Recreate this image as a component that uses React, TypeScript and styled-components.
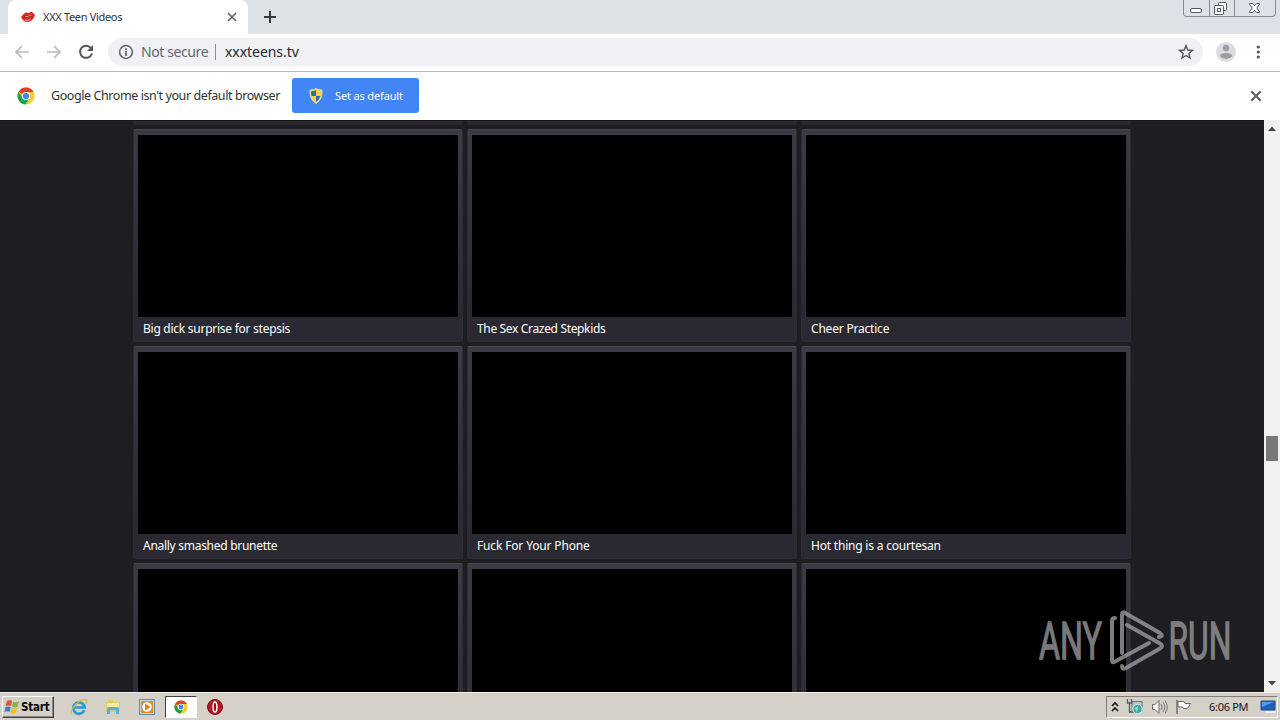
import React from "react";
import styled, { createGlobalStyle } from "styled-components";

const Global = createGlobalStyle`
  * { box-sizing: border-box; }
  html, body { margin: 0; height: 100%; overflow: hidden; }
  body { font-family: "Noto Sans", "Open Sans", sans-serif; }
  svg { display: block; flex: none; }
`;

const Screen = styled.div`
  position: relative;
  width: 1280px;
  height: 720px;
  display: flex;
  flex-direction: column;
  overflow: hidden;
`;

const Label = styled.span<{ $size: number; $spacing?: number; $color?: string }>`
  font-size: ${(p) => p.$size}px;
  letter-spacing: ${(p) => p.$spacing ?? 0}px;
  color: ${(p) => p.$color ?? "#303236"};
  white-space: nowrap;
  line-height: 18px;
`;

const TabStrip = styled.div`
  display: flex;
  height: 34px;
  background: #dee1e6;
  padding-left: 8px;
`;

const Tab = styled.div`
  display: flex;
  align-items: center;
  width: 240px;
  height: 34px;
  padding: 0 11px 0 13px;
  background: #fff;
  border-radius: 8px 8px 0 0;
  gap: 8px;
  & > span { flex: 1; }
`;

const NewTab = styled.div`
  display: flex;
  align-items: center;
  padding-left: 15px;
`;

const WindowButtons = styled.div`
  display: flex;
  margin: 0 4px 0 auto;
  width: 93px;
  height: 17px;
  border: 1px solid #878b96;
  border-top: 0;
  border-radius: 0 0 4px 4px;
`;

const WindowButton = styled.div<{ $width: number }>`
  width: ${(p) => p.$width}px;
  height: 16px;
  & + & { border-left: 1px solid #878b96; }
`;

const Toolbar = styled.div`
  display: flex;
  align-items: center;
  height: 38px;
  background: #fff;
  border-bottom: 1px solid #b4b9b9;
  padding: 0 13px 2px 14px;
`;

const NavIcons = styled.div`
  display: flex;
  gap: 16px;
  width: 94px;
`;

const Address = styled.div`
  display: flex;
  align-items: center;
  width: 1095px;
  height: 28px;
  margin-top: 1px;
  padding: 0 9px 0 10px;
  border-radius: 14px;
  background: #eff1f4;
`;

const SecurityText = styled.div`
  display: flex;
  width: 74px;
  margin-left: 7px;
  white-space: nowrap;
`;

const Divider = styled.i`
  width: 1px;
  height: 16px;
  margin-right: 9px;
  background: #8c9094;
`;

const StarSlot = styled.div`margin-left: auto;`;

const Account = styled.div`
  display: flex;
  align-items: center;
  gap: 15px;
  padding: 1px 0 0 13px;
`;

const InfoBar = styled.div`
  display: flex;
  align-items: center;
  height: 48px;
  padding: 0 18px 0 17px;
  background: #fff;
  & > svg:last-child { margin-left: auto; }
`;

const InfoText = styled.div`
  display: flex;
  width: 241px;
  margin: -1px 0 0 16px;
`;

const DefaultButton = styled.div`
  display: flex;
  align-items: center;
  width: 127px;
  height: 35px;
  margin-bottom: 1px;
  padding-left: 16px;
  gap: 11px;
  border-radius: 3px;
  background: #4285f4;
`;

const Viewport = styled.div`
  display: flex;
  height: 572px;
`;

const Page = styled.main`
  width: 1264px;
  overflow: hidden;
  background: #1e1d22;
  border-top: 1px solid #17161b;
`;

const RowAbove = styled.div`
  display: grid;
  grid-template-columns: repeat(3, 330px);
  gap: 4px;
  height: 4px;
  margin: 0 0 4px 133px;
  & > i { background: #292830; border-radius: 0 0 2px 2px; }
`;

const Grid = styled.div`
  display: grid;
  grid-template-columns: repeat(3, 330px);
  grid-auto-rows: 213px;
  gap: 4px;
  margin-left: 133px;
`;

const Card = styled.article`
  padding: 5px 4px 0;
  border: 1px solid #2d2c35;
  border-top-color: #494852;
  border-radius: 2px;
  background: linear-gradient(#3c3a43, #2a2932 90%);
`;

const Thumb = styled.div`
  height: 182px;
  background: #000;
`;

const Title = styled.div`
  display: flex;
  align-items: center;
  height: 23px;
  padding-left: 5px;
`;

const ScrollBar = styled.div`
  display: flex;
  flex-direction: column;
  align-items: center;
  width: 16px;
  background: #f1f1f1;
`;

const ScrollThumb = styled.div`
  width: 12px;
  height: 25px;
  margin: 299px 0 auto;
  background: #787878;
`;

const TaskBar = styled.div`
  display: flex;
  align-items: center;
  height: 28px;
  padding: 0 2px 0 2px;
  background: #d5d0c8;
  border-top: 1px solid #f0eee9;
`;

const StartButton = styled.div`
  display: flex;
  align-items: center;
  gap: 1px;
  width: 52px;
  height: 22px;
  padding-left: 1px;
  border: 1px solid #fff;
  border-right-color: #404040;
  border-bottom-color: #404040;
  box-shadow: inset -1px -1px #8c8982;
  font: bold 11.5px "DejaVu Sans Condensed", sans-serif;
  letter-spacing: -0.2px;
  color: #000;
`;

const Launchers = styled.div`
  display: flex;
  align-items: center;
  margin-left: 16px;
  gap: 16px;
`;

const ActiveTask = styled.div`
  display: flex;
  align-items: center;
  justify-content: center;
  width: 32px;
  height: 22px;
  margin: 0 -7px;
  background: #fff;
  border: 1px solid #404040;
  border-right-color: #fff;
  border-bottom-color: #fff;
`;

const Tray = styled.div`
  display: flex;
  align-items: center;
  width: 172px;
  height: 22px;
  margin-left: auto;
  padding-left: 4px;
  gap: 7px;
  border: 1px solid #817e78;
  border-right-color: #fff;
  border-bottom-color: #fff;
`;

const Clock = styled.div`
  display: flex;
  width: 42px;
  margin: 0 2px 0 10px;
`;

const Watermark = styled.svg`
  position: absolute;
  left: 1020px;
  top: 602px;
`;

const ChromeLogo = ({ size }: { size: number }) => (
  <svg width={size} height={size} viewBox="0 0 18 18">
    <circle cx="9" cy="9" r="8.5" fill="#fbc928" />
    <path d="M9 9 1.6 4.8A8.5 8.5 0 0 1 16.5 5H9Z" fill="#df3b30" />
    <path d="M1.6 4.8A8.5 8.5 0 0 0 8.4 17.5L12.4 11 9 9 5.6 11Z" fill="#249b50" />
    <circle cx="9" cy="9" r="4.1" fill="#fff" />
    <circle cx="9" cy="9" r="3.1" fill="#4285ee" />
  </svg>
);

const Cross = ({ size, color = "#5b5f63" }: { size: number; color?: string }) => (
  <svg width={size} height={size} viewBox="0 0 10 10">
    <path d="M1 1 9 9M9 1 1 9" stroke={color} strokeWidth="1.6" />
  </svg>
);

const Arrow = ({ flip }: { flip?: boolean }) => (
  <svg width="16" height="16" viewBox="0 0 16 16">
    <path
      d={flip ? "M1 8H14M8 2 14 8 8 14" : "M15 8H2M8 2 2 8 8 14"}
      fill="none" stroke="#b9bbbe" strokeWidth="1.7"
    />
  </svg>
);

const videos: { title: string; spacing: number }[] = [
  { title: "Big dick surprise for stepsis", spacing: -0.26 },
  { title: "The Sex Crazed Stepkids", spacing: -0.34 },
  { title: "Cheer Practice", spacing: -0.2 },
  { title: "Anally smashed brunette", spacing: -0.28 },
  { title: "Fuck For Your Phone", spacing: -0.15 },
  { title: "Hot thing is a courtesan", spacing: -0.2 },
  { title: "", spacing: 0 },
  { title: "", spacing: 0 },
  { title: "", spacing: 0 },
];

export default function App() {
  return (
    <Screen>
      <Global />
      <TabStrip>
        <Tab>
          <svg width="14" height="14" viewBox="0 0 14 14">
            <path d="M0 7Q3 3 5.5 2.3L7.5 3.2 10 1.8Q12 2.3 14 5 12 11 7 12 2 12 0 7Z" fill="#df2822" />
            <path d="M2 7.3Q7 4.2 12 5.5 7 8.5 2 7.3Z" fill="#7b1616" />
            <path d="M4 6.9 10.5 5.4M4 10.2Q7 11 10 9" stroke="#f4a49c" strokeWidth="1" fill="none" />
          </svg>
          <Label $size={11} $spacing={-0.32}>XXX Teen Videos</Label>
          <Cross size={10} />
        </Tab>
        <NewTab>
          <svg width="14" height="14"><path d="M7 1V13M1 7H13" stroke="#34383c" strokeWidth="2" /></svg>
        </NewTab>
        <WindowButtons>
          <WindowButton $width={25}>
            <svg width="25" height="16"><rect x="6.5" y="8.5" width="11" height="4" rx="1.5" fill="#fff" stroke="#545966" /></svg>
          </WindowButton>
          <WindowButton $width={25}>
            <svg width="24" height="16" fill="#fff" stroke="#545966">
              <rect x="8.5" y="2.5" width="8" height="8" rx="1" />
              <rect x="4.5" y="5.5" width="9" height="9" rx="1" />
              <rect x="7.5" y="8.5" width="3" height="3" />
            </svg>
          </WindowButton>
          <WindowButton $width={41}>
            <svg width="40" height="16">
              <path d="M14.5 3.5H18L19.7 5.7 21.4 3.5H24.5V4.5L21.8 8 24.5 11.5V12.5H21.4L19.7 10.3 18 12.5H14.5V11.5L17.3 8 14.5 4.5Z" fill="#fff" stroke="#545966" />
            </svg>
          </WindowButton>
        </WindowButtons>
      </TabStrip>

      <Toolbar>
        <NavIcons>
          <Arrow />
          <Arrow flip />
          <svg width="16" height="16" viewBox="0 0 16 16">
            <path d="M13.2 4.3A6.1 6.1 0 1 0 14 9.5" fill="none" stroke="#53575b" strokeWidth="2" />
            <path d="M15 1V7H9Z" fill="#53575b" />
          </svg>
        </NavIcons>
        <Address>
          <svg width="16" height="16">
            <circle cx="8" cy="8" r="6.4" fill="none" stroke="#5f6368" strokeWidth="1.5" />
            <path d="M8 4.2V5.9M8 7V12" stroke="#5f6368" strokeWidth="1.7" />
          </svg>
          <SecurityText><Label $size={14} $spacing={-0.4} $color="#63676c">Not secure</Label></SecurityText>
          <Divider />
          <Label $size={14} $spacing={-0.05} $color="#25282c">xxxteens.tv</Label>
          <StarSlot>
            <svg width="16" height="16" viewBox="0 0 16 16">
              <path d="M8 1.7 9.8 6 14.4 6.4 10.9 9.4 12 14 8 11.5 4 14 5.1 9.4 1.6 6.4 6.2 6Z" fill="none" stroke="#53575b" strokeWidth="1.4" />
            </svg>
          </StarSlot>
        </Address>
        <Account>
          <svg width="20" height="20">
            <circle cx="10" cy="10" r="10" fill="#dddddf" />
            <circle cx="10" cy="6" r="3.2" fill="#9b9da0" />
            <ellipse cx="10" cy="13.8" rx="6" ry="2.9" fill="#9b9da0" />
          </svg>
          <svg width="14" height="16" fill="#4f5357">
            <circle cx="7.3" cy="3" r="1.6" /><circle cx="7.3" cy="8" r="1.6" /><circle cx="7.3" cy="13" r="1.6" />
          </svg>
        </Account>
      </Toolbar>

      <InfoBar>
        <ChromeLogo size={18} />
        <InfoText><Label $size={12.5} $spacing={-0.42}>Google Chrome isn't your default browser</Label></InfoText>
        <DefaultButton>
          <svg width="16" height="16" viewBox="0 0 16 16">
            <path d="M8 .5Q5 2.3 2 2 1 11 8 15.5 15 11 14 2 11 2.3 8 .5Z" fill="#f8d445" stroke="#d9dfbc" strokeWidth=".9" />
            <path d="M8 2Q5.6 3.4 3.1 3.2 2.9 6 3.6 8H8ZM8 8H12.4Q11.2 12 8 14Z" fill="#246dbb" />
          </svg>
          <Label $size={11} $spacing={-0.15} $color="#fff">Set as default</Label>
        </DefaultButton>
        <Cross size={12} />
      </InfoBar>

      <Viewport>
        <Page>
          <RowAbove><i /><i /><i /></RowAbove>
          <Grid>
            {videos.map((video, i) => (
              <Card key={i}>
                <Thumb />
                <Title><Label $size={12} $spacing={video.spacing} $color="#fff">{video.title}</Label></Title>
              </Card>
            ))}
          </Grid>
        </Page>
        <ScrollBar>
          <svg width="16" height="17"><path d="M4 11 8 6.5 12 11Z" fill="#484848" /></svg>
          <ScrollThumb />
          <svg width="16" height="17"><path d="M4 6 8 10.5 12 6Z" fill="#484848" /></svg>
        </ScrollBar>
      </Viewport>

      <TaskBar>
        <StartButton>
          <svg width="16" height="16" viewBox="0 0 15 16">
            <path d="M2.5 2Q5 0 7.5 2L6.5 7Q4 5.8 1 7Z" fill="#e8532b" />
            <path d="M8.5 2.5Q11 4 14.5 2.3L13 8Q10 9 7.5 7.5Z" fill="#78b943" />
            <path d="M1 8Q4 6.8 6.3 8L5 13Q2.5 11.5 0 13Z" fill="#3581cb" />
            <path d="M7.3 8.5Q10 10 12.8 9L11.5 14Q8.5 15.5 6 13.5Z" fill="#f3bd2c" />
          </svg>
          Start
        </StartButton>
        <Launchers>
          <svg width="18" height="18" viewBox="0 0 18 18">
            <path d="M14.3 12.3A5.7 5.7 0 1 1 14.7 9.5H5" fill="none" stroke="#2999d8" strokeWidth="2.7" />
            <path d="M2 16Q-1 15 4 8.5 11 .5 16 1.6 17.8 2.5 15.5 6" fill="none" stroke="#e2b63b" strokeWidth="1.2" />
          </svg>
          <svg width="18" height="18" viewBox="0 0 18 18">
            <path d="M2 4H4V2H9L10 4H16V14H2Z" fill="#e5c768" />
            <path d="M3 5H15V11H3Z" fill="#f7e7a4" />
            <path d="M3 16V11Q3 9 5 9H13Q15 9 15 11V16H12V12H6V16Z" fill="#55aedc" />
          </svg>
          <svg width="18" height="18" viewBox="0 0 18 18">
            <rect x="1.5" y="1.5" width="15" height="15" fill="#b9dbef" stroke="#4e91bd" />
            <rect x="3" y="3" width="12" height="12" fill="#ef8718" />
            <circle cx="9" cy="9" r="4.8" fill="#fff" /><path d="M7 5.5V12.5L12.5 9Z" fill="#ed7913" />
          </svg>
          <ActiveTask><ChromeLogo size={14} /></ActiveTask>
          <svg width="18" height="18" viewBox="0 0 18 18">
            <circle cx="9" cy="9" r="7.5" fill="#b21a20" stroke="#7d0b10" />
            <ellipse cx="9" cy="9" rx="1.9" ry="5" fill="#8f1015" stroke="#fff" strokeWidth="1.5" />
          </svg>
        </Launchers>
        <Tray>
          <svg width="8" height="12"><path d="M1 5 4 2 7 5M1 10 4 7 7 10" fill="none" stroke="#111" strokeWidth="1.6" /></svg>
          <svg width="18" height="17" viewBox="0 0 17 17">
            <rect x="5.5" y="3.5" width="10" height="9" fill="#b8c4c8" stroke="#65737a" />
            <path d="M1 1V5H5V1M3 5V14H8" fill="none" stroke="#55595c" strokeWidth="1.3" />
            <circle cx="11" cy="11" r="4.7" fill="#3ba6ad" stroke="#e0f4f2" /><path d="M8 10 11 8 12 11 10 14Z" fill="#88d4bd" />
          </svg>
          <svg width="17" height="16" viewBox="0 0 17 16">
            <path d="M1.5 5.5H4L8 1.5V14.5L4 10.5H1.5Z" fill="#f6f6f6" stroke="#6d6f71" />
            <path d="M10 5Q12 8 10 11M12 3Q15.5 8 12 13M14 1.5Q18.5 8 14 14.5" fill="none" stroke="#77797b" />
          </svg>
          <svg width="17" height="16" viewBox="0 0 17 16">
            <path d="M2 1V15" stroke="#66686a" strokeWidth="1.4" />
            <path d="M3 2.5H9L10 4.5H15.5L12.5 9.5H8.5L7.5 8H3Z" fill="#f9f9f9" stroke="#66686a" />
          </svg>
          <Clock><Label $size={11} $spacing={-0.3} $color="#111">6:06 PM</Label></Clock>
          <svg width="17" height="15" viewBox="0 0 17 15">
            <path d="M1 2H15V11H1Z" fill="#1763bd" stroke="#274d80" /><path d="M2 3H14L2 8Z" fill="#559be2" />
            <path d="M6 12H16V14H5Z" fill="#e9edf2" />
          </svg>
        </Tray>
      </TaskBar>

      <Watermark width="230" height="80" viewBox="1020 602 230 80">
        <g fill="#98989b" stroke="#98989b" strokeWidth="1.3" opacity=".8" fontFamily="Roboto, sans-serif" fontSize="51">
          <text x="1039" y="658.5" textLength="63" lengthAdjust="spacingAndGlyphs">ANY</text>
          <text x="1168.5" y="658.5" textLength="63" lengthAdjust="spacingAndGlyphs">RUN</text>
        </g>
        <g fill="none" stroke="#9c9c9f" strokeWidth="4" strokeLinejoin="round" strokeLinecap="round" opacity=".8">
          <path d="M1122 653V615Q1122 611 1125 613L1160 633Q1164 636 1159 637" />
          <path d="M1115 618Q1112 618 1112 621V660Q1112 664 1116 661L1149 643" />
          <path d="M1127 625 1160 643.5Q1164 646 1160 648.5L1126 668Q1122 670 1122 666" />
        </g>
      </Watermark>
    </Screen>
  );
}
